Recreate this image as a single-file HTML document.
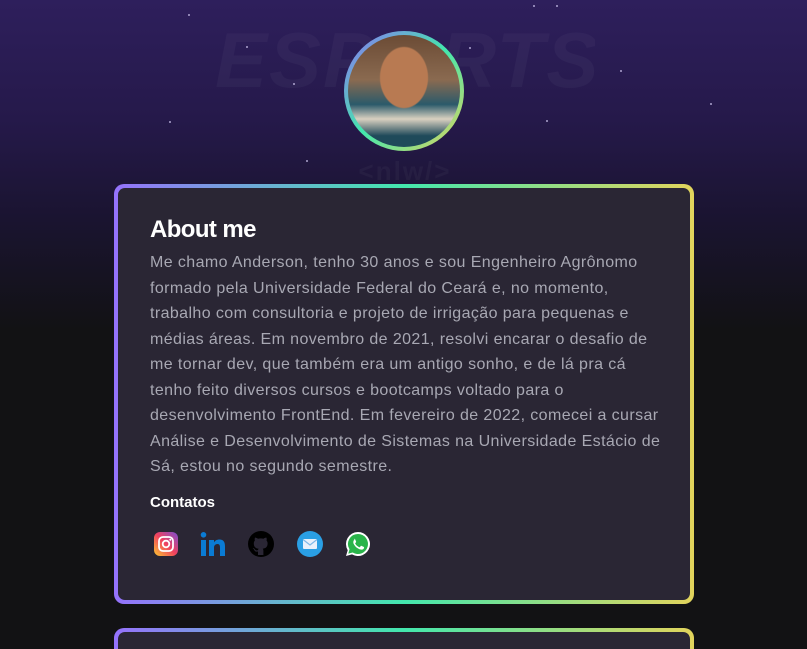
<!DOCTYPE html>
<html style="height:649px;overflow:hidden;background:#121214"><head><meta charset="utf-8"><style>
*{margin:0;padding:0;box-sizing:border-box}
body{width:807px;height:649px;overflow:hidden;font-family:"Liberation Sans",sans-serif;
background:linear-gradient(180deg,#2e1f5c 0px,#25194a 120px,#1a1430 220px,#121214 330px,#121214 649px);position:relative}
.logo{position:absolute;left:215px;top:15px;width:380px;height:165px;overflow:hidden;color:rgba(255,255,255,0.035);font:italic 900 78px "Liberation Sans",sans-serif;text-align:center;letter-spacing:2px}
.logo .nlw{font-size:26px;font-style:normal;font-weight:700;display:block;margin-top:50px}
.star{position:absolute;width:2px;height:2px;background:#cfc7f0;border-radius:50%;opacity:.8}
.avatar{position:absolute;left:344px;top:31px;width:120px;height:120px;border-radius:50%;padding:4px;
background:linear-gradient(135deg,#8d72f5,#43e7ad 50%,#e2d45c)}
.avatar div{width:100%;height:100%;border-radius:50%;
background:radial-gradient(ellipse 22% 28% at 50% 38%,#b87a52 0 95%,transparent 100%),linear-gradient(180deg,#6b4b35 0%,#8a6a50 40%,#2b5a6a 62%,#d9d0c0 75%,#1f4a5a 90%)}
.card{position:absolute;left:114px;width:580px;border-radius:10px;padding:4px;background:linear-gradient(90deg,#9572fc,#43e7ad 50%,#e2d45c)}
.card .in{background:#2a2634;border-radius:7px;height:100%}
h1{position:absolute;left:150px;top:216px;color:#fff;font-size:24px;font-weight:700;letter-spacing:-0.6px}
p{position:absolute;left:150px;top:250px;width:520px;color:#a8a8b3;font-size:16px;letter-spacing:.4px;line-height:25.5px}
h3{position:absolute;left:150px;top:494px;color:#fff;font-size:15px;font-weight:700}
.ic{position:absolute;top:531px;width:26px;height:26px}
</style></head><body>
<div class="logo">ESPORTS<span class="nlw">&lt;nlw/&gt;</span></div>
<div class="star" style="left:188px;top:14px"></div><div class="star" style="left:246px;top:46px"></div>
<div class="star" style="left:293px;top:83px"></div><div class="star" style="left:169px;top:121px"></div>
<div class="star" style="left:469px;top:47px"></div><div class="star" style="left:533px;top:5px"></div>
<div class="star" style="left:556px;top:5px"></div><div class="star" style="left:710px;top:103px"></div>
<div class="star" style="left:546px;top:120px"></div><div class="star" style="left:306px;top:160px"></div>
<div class="star" style="left:620px;top:70px"></div>
<div class="avatar"><div></div></div>
<div class="card" style="top:184px;height:420px"><div class="in"></div></div>
<div class="card" style="top:628px;height:21px;border-radius:10px 10px 0 0;padding-bottom:0"><div class="in" style="border-radius:7px 7px 0 0"></div></div>
<h1>About me</h1>
<p>Me chamo Anderson, tenho 30 anos e sou Engenheiro Agrônomo formado pela Universidade Federal do Ceará e, no momento, trabalho com consultoria e projeto de irrigação para pequenas e médias áreas. Em novembro de 2021, resolvi encarar o desafio de me tornar dev, que também era um antigo sonho, e de lá pra cá tenho feito diversos cursos e bootcamps voltado para o desenvolvimento FrontEnd. Em fevereiro de 2022, comecei a cursar Análise e Desenvolvimento de Sistemas na Universidade Estácio de Sá, estou no segundo semestre.</p>
<h3>Contatos</h3>
<svg class="ic" style="left:153px" viewBox="0 0 26 26"><defs><linearGradient id="ig" x1="0" y1="1" x2="1" y2="0"><stop offset="0" stop-color="#fdc830"/><stop offset=".5" stop-color="#f0415f"/><stop offset="1" stop-color="#7b4fd4"/></linearGradient></defs><rect x="1" y="1" width="24" height="24" rx="6" fill="url(#ig)"/><rect x="6" y="6" width="14" height="14" rx="4" fill="none" stroke="#fff" stroke-width="1.8"/><circle cx="13" cy="13" r="3.3" fill="none" stroke="#fff" stroke-width="1.8"/><circle cx="17.3" cy="8.7" r="1" fill="#fff"/></svg>
<svg class="ic" style="left:200px" viewBox="0 0 26 26"><rect x="1" y="9" width="5" height="16" fill="#0a7bd4"/><circle cx="3.5" cy="3.8" r="2.8" fill="#0a7bd4"/><path d="M9 9h5v2.5c1-2 3-3 5.5-3 4 0 5.5 2.5 5.5 7V25h-5v-8.5c0-2.2-.7-3.5-2.6-3.5S14 14.5 14 16.5V25H9z" fill="#0a7bd4"/></svg>
<svg class="ic" style="left:248px" viewBox="0 0 26 26"><circle cx="13" cy="13" r="13" fill="#000"/><path d="M10 24v-3.5c-3 .6-3.6-1.300-3.600-1.300-.5-1.200-1.200-1.500-1.200-1.500-1-.7.1-.6.1-.6 1 .1 1.600 1.100 1.600 1.100 1 1.600 2.500 1.100 3.100.9.1-.7.4-1.100.7-1.400-2.400-.3-4.900-1.200-4.900-5.300 0-1.200.4-2.100 1.100-2.900-.1-.3-.5-1.400.1-2.900 0 0 .9-.3 3 1.100a10 10 0 015.400 0c2-1.400 3-1.100 3-1.100.6 1.500.2 2.600.1 2.900.7.8 1.100 1.700 1.100 2.900 0 4.100-2.500 5-4.900 5.300.4.3.7 1 .7 2V24z" fill="#2a2634"/></svg>
<svg class="ic" style="left:297px" viewBox="0 0 26 26"><circle cx="13" cy="13" r="13" fill="#2a9fe4"/><rect x="6" y="8" width="14" height="10" rx="1" fill="#e8f1fb"/><path d="M6 8.5l7 5.5 7-5.5" fill="none" stroke="#7db8e8" stroke-width="1.2"/></svg>
<svg class="ic" style="left:345px" viewBox="0 0 26 26"><path d="M13 1a12 12 0 00-10.3 18.2L1 25l6-1.6A12 12 0 1013 1z" fill="#fff"/><path d="M13 3a10 10 0 00-8.5 15.3l-1.2 4.3 4.4-1.1A10 10 0 1013 3z" fill="#29b44a"/><path d="M9.3 7.7c.3 0 .6 0 .8.6l1 2.3c.1.3 0 .5-.1.7l-.7.8c-.2.2-.2.4 0 .7a8 8 0 003.9 3.4c.3.1.5.1.7-.1l.9-1.1c.2-.3.4-.2.7-.1l2.2 1c.3.2.4.3.4.5 0 .8-.5 2-2 2.2-1.2.2-3-.3-5-1.7-2-1.5-3.4-3.6-3.7-4.8-.4-1.6.3-2.9 1.1-3.6z" fill="#fff"/></svg>
</body></html>
